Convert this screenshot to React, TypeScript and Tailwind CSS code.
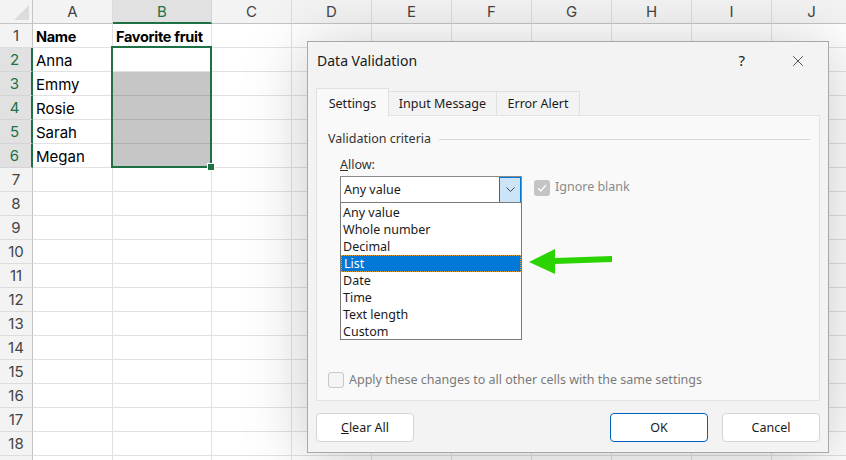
import { X } from 'lucide-react';

const cols = [
  { l: 'A', w: 80 },
  { l: 'B', w: 99 },
  { l: 'C', w: 80 },
  { l: 'D', w: 80 },
  { l: 'E', w: 80 },
  { l: 'F', w: 80 },
  { l: 'G', w: 80 },
  { l: 'H', w: 80 },
  { l: 'I', w: 80 },
  { l: 'J', w: 80 },
];

const names = ['Anna', 'Emmy', 'Rosie', 'Sarah', 'Megan'];
const rows = Array.from({ length: 19 }, (_, i) => i + 1);
const allowItems = ['Any value', 'Whole number', 'Decimal', 'List', 'Date', 'Time', 'Text length', 'Custom'];

function Sheet() {
  return (
    <div className="flex flex-col font-['Inter',sans-serif] text-[15px] text-black">
      {/* column headers */}
      <div className="flex h-[24px] shrink-0">
        <div className="relative w-[33px] shrink-0 bg-[#f3f3f3] border-r border-b border-[#c4c4c4]">
          <svg className="absolute left-[14px] top-[5px]" width="15" height="15" viewBox="0 0 15 15">
            <polygon points="15,0 15,15 0,15" fill="#dcdcdc" />
          </svg>
        </div>
        {cols.map(c => (
          <div
            key={c.l}
            style={{ width: c.w }}
            className={
              c.l === 'B'
                ? 'shrink-0 flex items-center justify-center pt-[2px] bg-[#e1e1e1] border-r border-[#d4d4d4] border-b-2 border-b-[#1e7145] text-[#1e7145]'
                : 'shrink-0 flex items-center justify-center pt-[2px] bg-[#f3f3f3] border-r border-[#dcdcdc] border-b border-b-[#c4c4c4] text-[#444]'
            }
          >
            {c.l}
          </div>
        ))}
      </div>
      {rows.map(r => {
        const sel = r >= 2 && r <= 6;
        return (
          <div key={r} className="flex h-[24px] shrink-0">
            <div
              className={
                sel
                  ? 'w-[33px] shrink-0 flex items-center justify-center pt-[2px] pr-[2px] bg-[#e1e1e1] border-r-2 border-r-[#1e7145] border-b border-[#d4d4d4] text-[#1e7145]'
                  : 'w-[33px] shrink-0 flex items-center justify-center pt-[2px] bg-[#f3f3f3] border-r border-r-[#c4c4c4] border-b border-[#dcdcdc] text-[#444]'
              }
            >
              {r < 19 ? r : ''}
            </div>
            {cols.map(c => {
              let text = '';
              let bold = false;
              if (r === 1 && c.l === 'A') { text = 'Name'; bold = true; }
              if (r === 1 && c.l === 'B') { text = 'Favorite fruit'; bold = true; }
              if (sel && c.l === 'A') text = names[r - 2];
              const gray = c.l === 'B' && r >= 3 && r <= 6;
              return (
                <div
                  key={c.l}
                  style={{ width: c.w }}
                  className={
                    (gray ? 'bg-[#c6c6c6] border-b border-[#b0b0b0] ' : 'border-b border-[#e1e1e1] ') +
                    'shrink-0 flex items-center pt-[3px] border-r border-r-[#e1e1e1] pl-[3px] whitespace-nowrap overflow-hidden ' +
                    (bold ? 'font-bold text-[14.5px] tracking-[-0.3px]' : '')
                  }
                >
                  {text}
                </div>
              );
            })}
          </div>
        );
      })}
    </div>
  );
}

function Check({ checked, disabled }: { checked?: boolean; disabled?: boolean }) {
  if (checked) {
    return (
      <div className="w-[16px] h-[16px] rounded-[3px] bg-[#c4c4c4] flex items-center justify-center">
        <svg width="10" height="8" viewBox="0 0 10 8">
          <path d="M1 4.2 L3.8 7 L9 1" stroke="#fff" strokeWidth="1.3" fill="none" />
        </svg>
      </div>
    );
  }
  return (
    <div className={'w-[16px] h-[16px] rounded-[3px] border bg-[#f5f5f5] ' + (disabled ? 'border-[#c8c8c8]' : 'border-[#888]')} />
  );
}

function Dialog() {
  return (
    <div className="absolute left-[307px] top-[41px] w-[522px] flex flex-col bg-[#f3f3f3] border border-[#a8a8a8] shadow-[0_6px_60px_rgba(0,0,0,0.22)] font-['Noto_Sans',sans-serif] text-[12.5px] text-[#1a1a1a]">
      {/* title */}
      <div className="h-[37px] flex items-center pl-[9px] pr-[21px]">
        <span className="text-[14px]">Data Validation</span>
        <span className="ml-auto text-[15px] mr-[44px]">?</span>
        <X size={18} strokeWidth={1} className="text-[#222]" />
      </div>

      {/* tabs */}
      <div className="h-[36px] flex items-end px-[8px]">
        <div className="relative z-10 -mb-px w-[73px] h-[28px] flex items-center justify-center pt-[3px] bg-[#f9f9f9] border border-b-0 border-[#e0e0e0]">
          Settings
        </div>
        <div className="w-[108px] h-[24px] flex items-center justify-center pt-[2px] bg-[#f3f3f3] border border-l-0 border-b-0 border-[#e0e0e0]">
          Input Message
        </div>
        <div className="w-[83px] h-[24px] flex items-center justify-center pt-[2px] bg-[#f3f3f3] border border-l-0 border-b-0 border-[#e0e0e0]">
          Error Alert
        </div>
      </div>

      {/* panel */}
      <div className="relative mx-[8px] h-[286px] flex flex-col bg-[#f9f9f9] border border-[#e3e3e3]">
        <div className="flex items-center pl-[11px] pr-[9px] mt-[14px]">
          <span className="text-[#333]">Validation criteria</span>
          <div className="flex-1 h-px bg-[#d9d9d9] ml-[8px]" />
        </div>
        <div className="pl-[23px] mt-[7px] text-[#333]">
          <span className="underline">A</span>llow:
        </div>
        <div className="flex items-center pl-[23px] mt-[1px]">
          <div className="w-[182px] h-[28px] flex bg-white border border-[#8a8a8a]">
            <div className="flex-1 flex items-center pl-[3px] pt-[1px]">Any value</div>
            <div className="w-[22px] flex items-center justify-center bg-[#cce4f7] border border-[#0078d4]">
              <svg width="9" height="5" viewBox="0 0 9 5">
                <path d="M0.5 0.5 L4.5 4.5 L8.5 0.5" stroke="#444" strokeWidth="1" fill="none" />
              </svg>
            </div>
          </div>
          <div className="ml-[12px] flex items-center gap-[5px] -mt-[4px]">
            <Check checked />
            <span className="text-[#8a8a8a]">Ignore blank</span>
          </div>
        </div>

        {/* open list */}
        <div className="absolute left-[23px] top-[86px] w-[182px] h-[138px] bg-white border border-[#7a7a7a] pt-[1px] z-20">
          {allowItems.map(it => (
            <div
              key={it}
              className={
                'h-[17px] flex items-center pl-[2px] pt-[1px] leading-none ' +
                (it === 'List' ? 'bg-[#0078d7] text-white border border-dotted border-[#e0a040]' : '')
              }
            >
              {it}
            </div>
          ))}
        </div>

        <div className="mt-auto mb-[10px] pl-[11px] flex items-center gap-[5px]">
          <Check disabled />
          <span className="text-[#7a7a7a] pt-[1px]">Apply these changes to all other cells with the same settings</span>
        </div>
      </div>

      {/* buttons */}
      <div className="mt-[12px] mb-[10px] px-[8px] flex items-center">
        <button className="w-[98px] h-[29px] pt-[2px] bg-white border border-[#d4d4d4] rounded-[4px]">
          <span className="underline">C</span>lear All
        </button>
        <button className="ml-auto w-[98px] h-[29px] pt-[2px] bg-white border border-[#005fb8] rounded-[4px]">OK</button>
        <button className="ml-[14px] w-[98px] h-[29px] pt-[2px] bg-white border border-[#d4d4d4] rounded-[4px]">Cancel</button>
      </div>
    </div>
  );
}

export default function App() {
  return (
    <div className="relative w-[846px] h-[460px] overflow-hidden bg-white">
      <Sheet />

      {/* selection B2:B6 */}
      <div className="absolute left-[111px] top-[46px] w-[101px] h-[122px] border-2 border-[#1e7145]" />
      <div className="absolute left-[208px] top-[164px] w-[6px] h-[6px] bg-[#1e7145] outline outline-1 outline-white" />

      <Dialog />

      {/* green arrow */}
      <svg className="absolute left-[525px] top-[245px]" width="92" height="32" viewBox="0 0 92 32">
        <polygon points="4,17 30,4 30,13 87,11 87,17 30,19 30,29" fill="#2bd400" />
      </svg>
    </div>
  );
}
